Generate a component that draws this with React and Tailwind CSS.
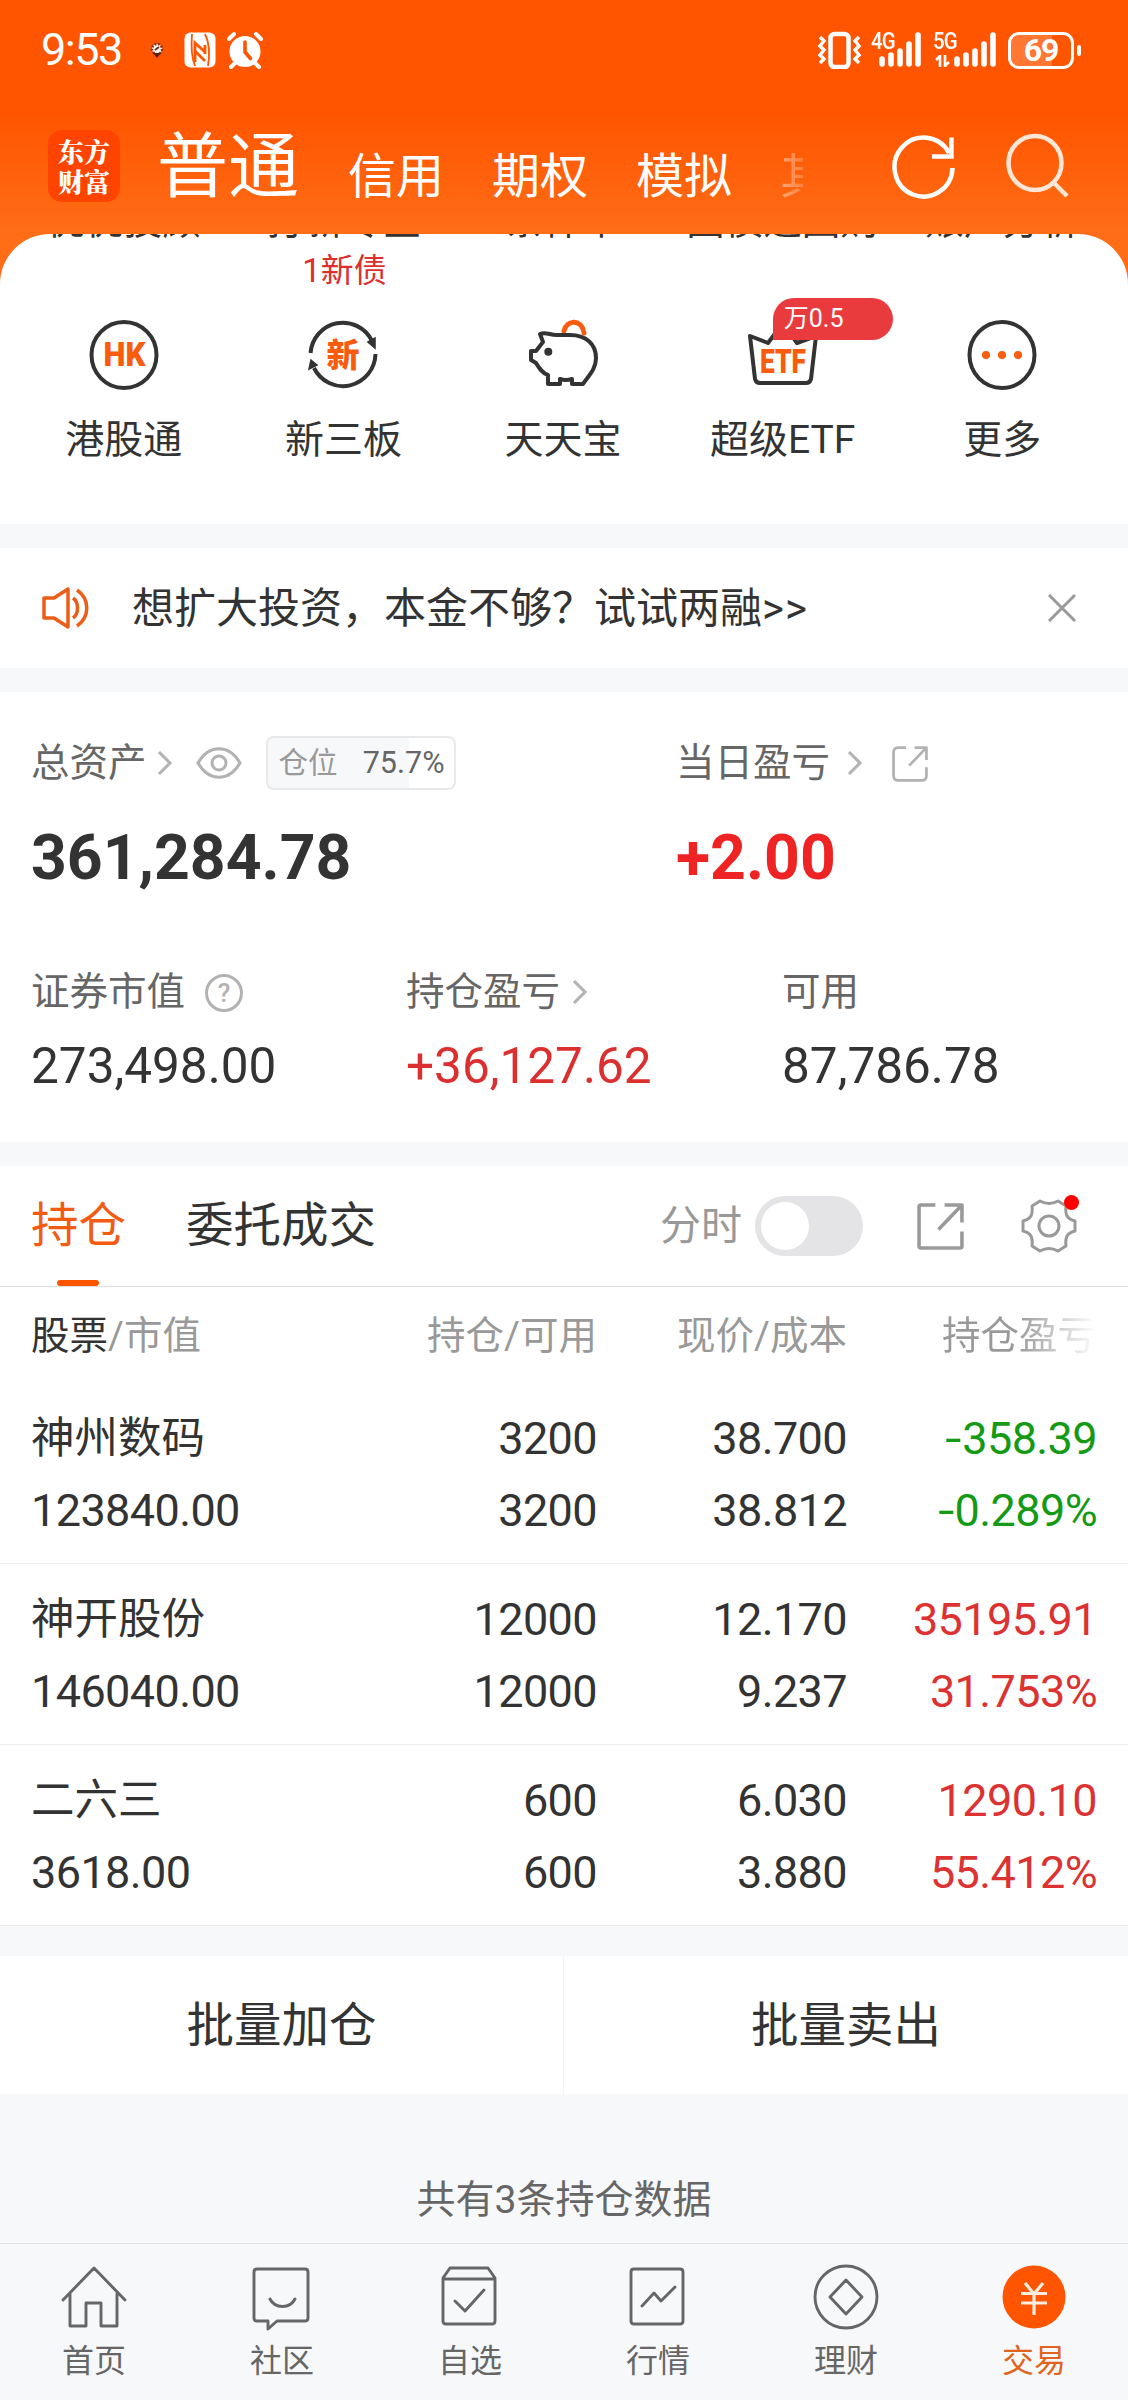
const quickLinks = [
  { id: 'hk', label: '港股通' },
  { id: 'neeq', label: '新三板' },
  { id: 'pig', label: '天天宝' },
  { id: 'etf', label: '超级ETF', badge: '万0.5' },
  { id: 'more', label: '更多' },
];

const clippedLinks = ['优优投顾', '打新专区', '条件单', '国债逆回购', '账户分析'];

const holdings = [
  { name: '神州数码', value: '123840.00', qty: '3200', avail: '3200', price: '38.700', cost: '38.812', pnl: '-358.39', pct: '-0.289%', down: true },
  { name: '神开股份', value: '146040.00', qty: '12000', avail: '12000', price: '12.170', cost: '9.237', pnl: '35195.91', pct: '31.753%' },
  { name: '二六三', value: '3618.00', qty: '600', avail: '600', price: '6.030', cost: '3.880', pnl: '1290.10', pct: '55.412%' },
];

const navItems = [
  { id: 'home', label: '首页' },
  { id: 'community', label: '社区' },
  { id: 'watch', label: '自选' },
  { id: 'market', label: '行情' },
  { id: 'wealth', label: '理财' },
  { id: 'trade', label: '交易', active: true },
];

const Signal = () => (
  <svg width="44" height="38" viewBox="0 0 44 38" stroke="#fff" strokeWidth="5.6" strokeLinecap="round">
    <path d="M4 28v5M13 24v9M22 20v13M31 13v20M40 4v29" />
  </svg>
);

const StatusBar = () => (
  <div className="flex h-[100px] items-center justify-between pl-[41px] pr-[47px] text-white">
    <div className="flex items-center">
      <span className="w-[84px] text-[45px] leading-[48px] tracking-[-1.5px]">9:53</span>
      <svg className="ml-[25px]" width="14" height="18" viewBox="0 0 14 18">
        <circle cx="7" cy="8" r="5" fill="#fff" stroke="#8a3414" strokeWidth="2.5" strokeDasharray="2 1.4" />
        <path d="M3 12h8l-4 5z" fill="#5c1c10" />
        <path d="M5 9l4-3" stroke="#7a2a10" strokeWidth="2" />
      </svg>
      <svg className="ml-[20px]" width="32" height="36" viewBox="0 0 32 36">
        <rect x="0.5" y="0.5" width="31" height="35" rx="6" fill="#fff" />
        <path d="M8 2C7 14 7 24 11 34M24 34C26 22 26 12 21 2" stroke="#ff5500" strokeWidth="1.8" fill="none" />
        <path d="M11 30V11l10 9M11 19l10 10M21 13v9" stroke="#ff5500" strokeWidth="2.8" fill="none" />
      </svg>
      <svg className="ml-[11px]" width="36" height="38" viewBox="0 0 36 38">
        <circle cx="18" cy="20.5" r="15.5" fill="#fff" />
        <path d="M2 8l5-5M34 8l-5-5M8 32l-4 4M28 32l4 4" stroke="#fff" strokeWidth="4" strokeLinecap="round" />
        <path d="M18 11v10l5.500 6.500" stroke="#ff5500" strokeWidth="3.6" fill="none" strokeLinecap="round" />
      </svg>
    </div>
    <div className="flex items-center">
      <svg width="44" height="38" viewBox="0 0 44 38" fill="none" stroke="#fff">
        <rect x="12.5" y="3" width="18" height="33" rx="4" strokeWidth="4.5" />
        <path d="M2 6l4 4-4 5 4 4-4 5 4 4-4 4M41 6l-4 4 4 5-4 4 4 5-4 4 4 4" strokeWidth="3.4" />
      </svg>
      <div className="relative ml-[16px] flex">
        <span className="absolute -left-[7px] -top-[2px] origin-left scale-x-[0.85] text-[24px] font-medium leading-[24px] tracking-[-1px]">4G</span>
        <Signal />
      </div>
      <div className="relative ml-[31px] flex">
        <span className="absolute -left-[20px] -top-[2px] origin-left scale-x-[0.85] text-[24px] font-medium leading-[24px] tracking-[-1px]">5G</span>
        <svg className="absolute -left-[18px] top-[24px]" width="16" height="12" viewBox="0 0 16 12" stroke="#fff" strokeWidth="2.6" fill="none">
          <path d="M1 5l4-4v11M14 7l-4 4V0" />
        </svg>
        <Signal />
      </div>
      <div className="ml-[11px] flex items-center">
        <div className="relative flex h-[37px] w-[66px] items-center justify-center overflow-hidden rounded-[11px] border-[3px] border-white">
          <div className="absolute left-0 top-0 h-full w-[69%] bg-white/20" />
          <span className="relative text-[32px] font-bold leading-none tracking-[-1px]">69</span>
        </div>
        <div className="ml-[3px] h-[11px] w-[4px] rounded bg-white" />
      </div>
    </div>
  </div>
);

const Header = () => (
  <div className="flex h-[134px] items-start pl-[48px]">
    <div className="mt-[30px] flex h-[72px] w-[72px] items-center justify-center rounded-[14px] bg-[#ff4400] text-center font-['Noto_Serif_CJK_SC','Noto_Sans_CJK_SC',serif] text-[26px] font-black leading-[30px] text-white">
      东方<br />财富
    </div>
    <span className="ml-[37px] mt-[17px] text-[71px] leading-[100px] text-white">普通</span>
    <div className="mt-[47px] flex text-[48px] leading-[60px] text-white">
      <span className="ml-[49px] w-[144px]">信用</span>
      <span className="w-[144px]">期权</span>
      <span className="w-[144px]">模拟</span>
      <span className="w-[23px] overflow-hidden whitespace-nowrap bg-[linear-gradient(90deg,rgba(255,255,255,0.45),rgba(255,255,255,0.2))] bg-clip-text text-transparent">其他</span>
    </div>
    <svg className="ml-[88px] mt-[34px]" width="64" height="68" viewBox="0 0 64 68" fill="none" stroke="#fff" strokeWidth="4.5">
      <path d="M61.500 34A29 29.500 0 1 1 58 19" />
      <path d="M60.400 3.500v19H41" />
    </svg>
    <svg className="ml-[50px] mt-[33px]" width="66" height="68" viewBox="0 0 66 68" fill="none" stroke="#ffe6d6" strokeWidth="4.5">
      <ellipse cx="30" cy="30" rx="26.500" ry="27" />
      <path d="M48 49l14 14" />
    </svg>
  </div>
);

const QuickIcon = ({ id }) => {
  const dark = { fill: 'none', stroke: '#333', strokeWidth: 4, strokeLinejoin: 'round' };
  if (id === 'hk') {
    return (
      <svg width="76" height="80" viewBox="0 0 76 80">
        <ellipse cx="38" cy="38" rx="32.5" ry="33" {...dark} />
        <text x="17.5" y="49" textLength="42" lengthAdjust="spacingAndGlyphs" fontSize="33" fontWeight="900" fill="#f85c0c">HK</text>
      </svg>
    );
  }
  if (id === 'neeq') {
    return (
      <svg width="76" height="80" viewBox="0 0 76 80">
        <path d="M5.500 36A32.500 33 0 0 1 67 24M70.500 37A32.500 33 0 0 1 9 51" {...dark} />
        <path d="M63 25l7-4v10zM6 43l-2 9 8-4z" fill="#333" stroke="#333" strokeWidth="1.5" />
        <text x="38" y="50" textAnchor="middle" fontSize="33" fontWeight="900" fill="#f85c0c">新</text>
      </svg>
    );
  }
  if (id === 'pig') {
    return (
      <svg width="76" height="80" viewBox="0 0 76 80">
        <path d="M39 14c3-12 18-12 20 2" fill="none" stroke="#f85c0c" strokeWidth="5" strokeLinecap="round" />
        <path d="M15 17c6-3 11 2 18 1h12c16 0 26 9 26 23 0 12-8 18-13 26H47v-5q-6 2-12 0v5H23v-9c-6-2-9-7-12-12l-5-3v-9h5l7-9z" {...dark} />
        <circle cx="23.3" cy="34.7" r="4" fill="#333" />
      </svg>
    );
  }
  if (id === 'etf') {
    return (
      <svg width="76" height="80" viewBox="0 0 76 80">
        <path d="M5 19l18 7L38 6l14 20 19-7-5 43q-1 4-5 4H15q-4 0-5-4z" {...dark} />
        <text x="15" y="56" textLength="46" lengthAdjust="spacingAndGlyphs" fontSize="33" fontWeight="900" fill="#f85c0c">ETF</text>
      </svg>
    );
  }
  return (
    <svg width="76" height="80" viewBox="0 0 76 80">
      <ellipse cx="38" cy="38" rx="32.5" ry="33" {...dark} />
      <g fill="#f85c0c">
        <circle cx="22" cy="38" r="4" />
        <circle cx="38" cy="38" r="4" />
        <circle cx="54" cy="38" r="4" />
      </g>
    </svg>
  );
};

const Chevron = ({ className }) => (
  <svg className={className} width="16" height="26" viewBox="0 0 16 26" fill="none" stroke="#b2b2b2" strokeWidth="3">
    <path d="M2 2l11 11L2 24" />
  </svg>
);

const ShareIcon = ({ size, color, radius = 2, className }) => (
  <svg className={className} width={size} height={size} viewBox="0 0 46 46" fill="none" stroke={color} strokeWidth="3.5" strokeLinejoin="round">
    {radius > 2 ? (
      <path d="M18 2H8q-6 0-6 6v30q0 6 6 6h30q6 0 6-6V27M29 2h15v16M43 3L22 25" />
    ) : (
      <path d="M18 2H4q-2 0-2 2v38q0 2 2 2h38q2 0 2-2V28M27 2h17v17M44 2L21 26" />
    )}
  </svg>
);

const NavIcon = ({ id }) => {
  const line = { fill: 'none', stroke: '#666', strokeWidth: 2.9, strokeLinejoin: 'round', strokeLinecap: 'round' };
  return (
    <svg width="68" height="68" viewBox="0 0 68 68">
      {id === 'home' && <path d="M3 37L34 5l31 32M10 31v32h16V40h15v23h16V31" {...line} />}
      {id === 'community' && (
        <path d="M9 6h48q3 0 3 3v46q0 3-3 3H29l-9 8v-8H9q-3 0-3-3V9q0-3 3-3zM22 36c5 10 20 10 25 0" {...line} />
      )}
      {id === 'watch' && <path d="M7 16v42q0 3 3 3h46q3 0 3-3V16zM7 15l7-10h38l7 10M19 38l10 10 19-21" {...line} />}
      {id === 'market' && <path d="M10 6h46q3 0 3 3v49q0 3-3 3H10q-3 0-3-3V9q0-3 3-3zM18 43l12-13 7 8 14-14" {...line} />}
      {id === 'wealth' && (
        <>
          <circle cx="34" cy="34" r="31" {...line} />
          <path d="M34 17l16 17-16 17-16-17z" {...line} />
        </>
      )}
      {id === 'trade' && (
        <>
          <circle cx="34" cy="34" r="31.500" fill="#ff5500" />
          <path d="M25 20l9 11 9-11M21 30.500h26M21 40h26M34 30v22" fill="none" stroke="#ffeedd" strokeWidth="3.2" />
        </>
      )}
    </svg>
  );
};

// the minus sign is drawn a bit wider than the font's hyphen
const Signed = ({ value }) => {
  if (!value.startsWith('-')) return value;
  return (
    <>
      <span className="mr-[3px] inline-block scale-x-[1.3]">-</span>
      {value.slice(1)}
    </>
  );
};

const HoldingRow = ({ item }) => {
  const pnlColor = item.down ? 'text-[#149a14]' : 'text-[#dc3232]';
  return (
    <div className="grid h-[181px] grid-cols-[300px_266px_250px_250px] content-start border-b border-[#ededed] pl-[31px] pt-[20px] text-[45px] leading-[72px] tracking-[-0.6px] text-[#333]">
      <span className="text-[43.5px] tracking-normal">{item.name}</span>
      <span className="text-right">{item.qty}</span>
      <span className="text-right">{item.price}</span>
      <span className={`text-right ${pnlColor}`}><Signed value={item.pnl} /></span>
      <span>{item.value}</span>
      <span className="text-right">{item.avail}</span>
      <span className="text-right">{item.cost}</span>
      <span className={`text-right ${pnlColor}`}><Signed value={item.pct} /></span>
    </div>
  );
};

const App = () => {
  return (
    <div className="flex h-[2400px] w-[1128px] flex-col overflow-hidden bg-[#f7f8fa] font-[Roboto,'Noto_Sans_CJK_SC',sans-serif] text-[#333]">
      <div className="bg-[linear-gradient(#ff5500_115px,#ff6d17_234px)]">
        <StatusBar />
        <Header />

        {/* shortcuts */}
        <div className="h-[290px] overflow-hidden rounded-t-[50px] bg-white">
          <div className="-mt-[35px] grid h-[50px] grid-cols-5 pl-[14px] pr-[16px] text-center text-[38.5px] leading-[44px]">
            {clippedLinks.map((text) => (
              <span key={text} className="whitespace-nowrap">{text}</span>
            ))}
          </div>
          <div className="w-[454px] pl-[235px] text-center text-[33px] leading-[44px] text-[#dc2f2f]">1新债</div>
          <div className="mt-[24px] grid grid-cols-5 pl-[14px] pr-[16px]">
            {quickLinks.map((item) => (
              <div key={item.id} className="relative flex flex-col items-center">
                <QuickIcon id={item.id} />
                {item.badge && (
                  <span className="absolute left-[100px] top-[-19px] h-[42px] w-[120px] rounded-[21px] rounded-bl-none bg-[#e93b3d] pl-[11px] text-[25px] leading-[42px] text-white">
                    {item.badge}
                  </span>
                )}
                <span className="mt-[13px] text-[39px] leading-[60px]">{item.label}</span>
              </div>
            ))}
          </div>
        </div>
      </div>

      {/* notice */}
      <div className="mt-[24px] flex h-[120px] items-center bg-white pl-[42px] pr-[52px]">
        <svg width="48" height="42" viewBox="0 0 48 42" fill="none" stroke="#ec5d17" strokeWidth="3.5" strokeLinejoin="round">
          <path d="M2 11h10L26 2v38L12 31H2zM31 11c6 4 6 16 0 20M35 3c13 9 13 27 0 36" />
        </svg>
        <span className="ml-[42px] mt-[2px] flex-1 text-[42px] leading-[60px]">想扩大投资，本金不够？试试两融<span className="tracking-[1px]">&gt;&gt;</span></span>
        <svg width="28" height="28" viewBox="0 0 28 28" stroke="#999" strokeWidth="3">
          <path d="M1 1l26 26M27 1L1 27" />
        </svg>
      </div>

      {/* assets */}
      <div className="mt-[24px] h-[450px] bg-white pl-[31px] pt-[42px]">
        <div className="flex">
          <div className="w-[645px]">
            <div className="flex h-[58px] items-center">
              <span className="text-[38.5px] text-[#666]">总资产</span>
              <Chevron className="ml-[10px]" />
              <svg className="ml-[23px]" width="46" height="32" viewBox="0 0 46 32" fill="none" stroke="#b2b2b2" strokeWidth="3">
                <path d="M2 16C13-3 33-3 44 16 33 35 13 35 2 16z" />
                <circle cx="23" cy="16" r="7" />
              </svg>
              <div className="ml-[24px] flex h-[54px] w-[190px] items-center justify-between rounded-[8px] border-2 border-[#e8e9eb] bg-[linear-gradient(90deg,#f7f8fa_75.7%,#fff_75.7%)] pl-[11px] pr-[9px] text-[29.5px]">
                <span className="text-[#999]">仓位</span>
                <span className="text-[30.5px] text-[#666]">75.7%</span>
              </div>
            </div>
            <div className="mt-[26px] text-[62.5px] font-bold leading-[80px]">361,284.78</div>
          </div>
          <div>
            <div className="flex h-[58px] items-center">
              <span className="text-[38.5px] text-[#666]">当日盈亏</span>
              <Chevron className="ml-[17px]" />
              <ShareIcon className="ml-[29px] mt-[2px]" size={36} color="#b2b2b2" radius={6} />
            </div>
            <div className="mt-[26px] text-[62.5px] font-bold leading-[80px] text-[#ee2424]">+2.00</div>
          </div>
        </div>
        <div className="mt-[65px] grid grid-cols-[375px_376px_1fr]">
          <div>
            <div className="flex h-[58px] items-center text-[38.5px] text-[#666]">
              证券市值
              <svg className="ml-[19px] mt-[2px]" width="40" height="40" viewBox="0 0 40 40">
                <circle cx="20" cy="20" r="17.500" fill="none" stroke="#b2b2b2" strokeWidth="3" />
                <text x="20" y="29" textAnchor="middle" fontSize="26" fontWeight="500" fill="#b2b2b2">?</text>
              </svg>
            </div>
            <div className="mt-[11px] text-[49.5px] leading-[68px]">273,498.00</div>
          </div>
          <div>
            <div className="flex h-[58px] items-center text-[38.5px] text-[#666]">
              持仓盈亏
              <Chevron className="ml-[12px]" />
            </div>
            <div className="mt-[11px] text-[49.5px] leading-[68px] text-[#dc2f2f]">+36,127.62</div>
          </div>
          <div>
            <div className="flex h-[58px] items-center text-[38.5px] text-[#666]">可用</div>
            <div className="mt-[11px] text-[49.5px] leading-[68px]">87,786.78</div>
          </div>
        </div>
      </div>

      {/* holdings */}
      <div className="mt-[24px] bg-white">
        <div className="flex h-[121px] items-center border-b border-[#dedede] pl-[31px]">
          <div className="relative flex h-[120px] items-center pt-[2px] text-[47.5px] text-[#f25c12]">
            持仓
            <div className="absolute bottom-0 left-[26px] h-[6px] w-[42px] rounded-[3px] bg-[#ff5500]" />
          </div>
          <span className="ml-[60px] pt-[2px] text-[47.5px]">委托成交</span>
          <span className="ml-[284px] pt-[1px] text-[41px] text-[#999]">分时</span>
          <div className="ml-[13px] h-[60px] w-[108px] rounded-full bg-[#e4e4e6] p-[6px]">
            <div className="h-[48px] w-[48px] rounded-full bg-white" />
          </div>
          <ShareIcon className="ml-[54px]" size={47} color="#999" />
          <div className="relative ml-[57px]">
            <svg width="56" height="56" viewBox="0 0 56 56" fill="none" stroke="#999" strokeWidth="3" strokeLinejoin="round">
              <path d="M19 3q9 5 18 0l8 5c-1 9 1 13 9 15v10c-8 2-10 6-9 15l-8 5q-9-5-18 0l-8-5c1-9-1-13-9-15V23c8-2 10-6 9-15z" />
              <circle cx="28" cy="28" r="10" />
            </svg>
            <div className="absolute right-[-2px] top-[-3px] h-[15px] w-[15px] rounded-full bg-[#ff0000]" />
          </div>
        </div>

        <div className="grid h-[96px] grid-cols-[300px_266px_250px_250px] items-center pl-[31px] pt-[2px] text-[38.5px] text-[#999]">
          <span><span className="text-[#333]">股票</span>/市值</span>
          <span className="text-right">持仓/可用</span>
          <span className="text-right">现价/成本</span>
          <span className="whitespace-nowrap bg-[linear-gradient(90deg,#999_68%,#fff_100%)] bg-clip-text pl-[95px] text-transparent">持仓盈亏</span>
        </div>

        {holdings.map((item) => (
          <HoldingRow key={item.name} item={item} />
        ))}
      </div>

      <div className="mt-[30px] grid h-[138px] grid-cols-2 divide-x divide-[#f4f4f4] bg-white text-center text-[47.5px] leading-[140px]">
        <span>批量加仓</span>
        <span>批量卖出</span>
      </div>

      <div className="flex-1 pt-[76px] text-center text-[39px] leading-[60px] text-[#666]">共有3条持仓数据</div>

      {/* bottom nav */}
      <div className="grid h-[157px] grid-cols-6 border-t border-[#dfe0e2]">
        {navItems.map((item) => (
          <div key={item.id} className="flex flex-col items-center pt-[19px]">
            <NavIcon id={item.id} />
            <span className={`mt-[8px] text-[32px] leading-[44px] ${item.active ? 'text-[#e06420]' : 'text-[#666]'}`}>{item.label}</span>
          </div>
        ))}
      </div>
    </div>
  );
};

export default App;
